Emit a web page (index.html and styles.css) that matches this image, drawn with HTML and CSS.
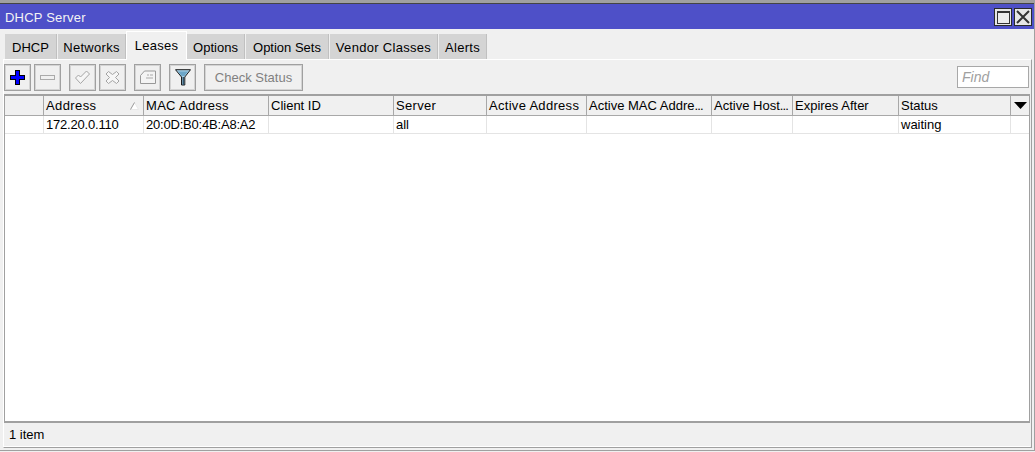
FILE: index.html
```html
<!DOCTYPE html>
<html lang="en">
<head>
<meta charset="utf-8">
<title>DHCP Server</title>
<link rel="stylesheet" href="styles.css">
</head>
<body>
<div class="window">
  <div class="titlebar">
    <span class="title">DHCP Server</span>
    <div class="winbtns">
      <button class="winbtn"><svg width="16" height="16" viewBox="0 0 16 16"><rect x="2" y="2" width="12" height="12" fill="#ececec" stroke="#333" shape-rendering="crispEdges"/><rect x="2" y="2" width="12" height="2" fill="#333" shape-rendering="crispEdges"/></svg></button>
      <button class="winbtn"><svg width="16" height="16" viewBox="0 0 16 16"><path d="M2 2L14 14M14 2L2 14" stroke="#333" stroke-width="2" fill="none"/></svg></button>
    </div>
  </div>
  <div class="tabs">
    <div class="tab w-dhcp">DHCP</div>
    <div class="tab w-net wide">Networks</div>
    <div class="tab active wide">Leases</div>
    <div class="tab w-opt">Options</div>
    <div class="tab w-sets">Option Sets</div>
    <div class="tab w-vendor wide">Vendor Classes</div>
    <div class="tab w-alerts wide">Alerts</div>
  </div>
  <div class="panel">
    <div class="toolbar">
      <div class="tool"><svg width="15" height="15" viewBox="0 0 15 15" shape-rendering="crispEdges"><path d="M5 0h5v5h5v5h-5v5H5v-5H0V5h5z" fill="#000"/><path d="M6 1h3v5h5v3H9v5H6V9H1V6h5z" fill="#0000ff"/></svg></div>
      <div class="tool"><svg width="15" height="15" viewBox="0 0 15 15" shape-rendering="crispEdges"><rect x="0.500" y="5.500" width="14" height="4" fill="#f0f0f0" stroke="#aaa"/></svg></div>
      <div class="tool sep-l"><svg width="15" height="14" viewBox="0 0 15 14"><path d="M0.500 8l3-3 2 2 6-6 3 3-9 9.500z" fill="#f6f6f6" stroke="#a4a4a4"/></svg></div>
      <div class="tool"><svg width="15" height="15" viewBox="0 0 15 15"><path d="M3.500 1.500l4 3 4-3 2.500 2.500-3.500 3.500 3.500 3.500-2.500 2.500-4-3-4 3-2.500-2.500 3.500-3.500-3.500-3.500z" fill="#f6f6f6" stroke="#a4a4a4"/></svg></div>
      <div class="tool sep-l"><svg width="16" height="14" viewBox="0 0 16 14"><path d="M0.500 13.500V5.500l4-4.500h11v12.500z" fill="#f4f4f4" stroke="#999"/><path d="M7 5h2M10 5h3M6 8h7" stroke="#aaa"/></svg></div>
      <div class="tool sep-l"><svg width="16" height="17" viewBox="0 0 16 17"><path d="M0.500 0.700h15L9.800 8v8H6.500V8z" fill="#a9d0e6" stroke="#1c1c1c"/><path d="M7.500 8h1.500v8H7.500z" fill="#33576e"/><path d="M3 2.500h10L9.500 7h-3z" fill="#6ca6c8"/></svg></div>
      <div class="tool textbtn sep-l">Check Status</div>
      <input class="find" placeholder="Find">
    </div>
    <div class="table">
      <div class="row head">
        <div class="cell"></div>
        <div class="cell sorted wider">Address<svg class="sort" width="9" height="8" viewBox="0 0 9 8"><path d="M4.500 0.500L8.500 7.500H0.500" fill="#fff" stroke="#e8e8e8"/><path d="M0.500 7.500L4.500 0.500" fill="none" stroke="#989898"/></svg></div>
        <div class="cell wide">MAC Address</div>
        <div class="cell">Client ID</div>
        <div class="cell wide">Server</div>
        <div class="cell wide">Active Address</div>
        <div class="cell">Active MAC Addre<span class="dots">...</span></div>
        <div class="cell">Active Host<span class="dots">...</span></div>
        <div class="cell">Expires After</div>
        <div class="cell">Status</div>
        <div class="cell menu"><svg width="13" height="7" viewBox="0 0 13 7"><path d="M0 0h13L6.500 7z" fill="#000"/></svg></div>
      </div>
      <div class="row body">
        <div class="cell"></div>
        <div class="cell tight">172.20.0.110</div>
        <div class="cell tight">20:0D:B0:4B:A8:A2</div>
        <div class="cell"></div>
        <div class="cell">all</div>
        <div class="cell"></div>
        <div class="cell"></div>
        <div class="cell"></div>
        <div class="cell"></div>
        <div class="cell">waiting</div>
        <div class="cell"></div>
      </div>
    </div>
    <div class="status">1 item</div>
  </div>
</div>
</body>
</html>
```
FILE: styles.css
```css
* { box-sizing: border-box; }
html, body { margin: 0; padding: 0; background: #f0f0f0; }
body {
  width: 1035px;
  height: 452px;
  overflow: hidden;
  font-family: "Liberation Sans", Arial, sans-serif;
  font-size: 13px;
  color: #000;
}
.wide { letter-spacing: 0.3px; }
.wider { letter-spacing: 0.4px; }
.tight { letter-spacing: -0.2px; }
.dots { letter-spacing: -0.9px; }
.window {
  height: 451px;
  border-top: 3px solid #a0a0a0;
  border-bottom: 1px solid #a0a0a0;
  border-right: 1px solid #a0a0a0;
  display: flex;
  flex-direction: column;
}
.titlebar {
  height: 26px;
  border-top: 1px solid #444;
  background: #4e50c8;
  display: flex;
  align-items: center;
  justify-content: space-between;
  padding: 1px 2px 0 5px;
  flex: none;
}
.title { color: #f4f4f4; font-size: 13px; letter-spacing: 0.2px; padding-top: 1px; }
.winbtns { display: flex; gap: 2px; }
.winbtn {
  width: 18px;
  height: 18px;
  padding: 0;
  border: 1px solid #2a2a2a;
  background: #e6e6e6;
  display: flex;
  align-items: center;
  justify-content: center;
  overflow: hidden;
}
.tabs {
  display: flex;
  height: 30px;
  align-items: flex-end;
  padding-left: 5px;
  flex: none;
}
.tab {
  height: 25px;
  margin-right: 1px;
  padding-top: 1px;
  background: #d4d4d4;
  border-right: 1px solid #c0c0c0;
  display: flex;
  align-items: center;
  justify-content: center;
  flex: none;
}
.w-dhcp { width: 52px; }
.w-net { width: 68px; margin-right: 0; }
.w-opt { width: 58px; }
.w-sets { width: 83px; }
.w-vendor { width: 108px; }
.w-alerts { width: 48px; }
.tab.active {
  position: relative;
  z-index: 1;
  width: 61px;
  height: 29px;
  margin-bottom: -1px;
  margin-right: 0;
  padding: 0 0 2px;
  background: #f0f0f0;
  border: 1px solid #fff;
  border-bottom: none;
}
.panel {
  flex: 1;
  display: flex;
  flex-direction: column;
  margin: 0 2px 2px 3px;
  padding-right: 1px;
  border-top: 1px solid #fff;
  border-right: 1px solid #a0a0a0;
  border-left: 1px solid #fff;
  border-bottom: 1px solid #a0a0a0;
  min-height: 0;
}
.toolbar {
  height: 34px;
  display: flex;
  align-items: center;
  flex: none;
}
.tool {
  width: 27px;
  height: 27px;
  border: 1px solid #a0a0a0;
  box-shadow: inset 0 0 0 1px #d4d4d4;
  margin-right: 3px;
  display: flex;
  align-items: center;
  justify-content: center;
  flex: none;
}
.sep-l { margin-left: 5px; }
.textbtn { width: 99px; color: #808080; font-size: 13px; margin-right: 0; }
.find {
  margin-left: auto;
  margin-right: 1px;
  width: 72px;
  height: 22px;
  border: 1px solid #a8a8a8;
  background: #fff;
  font: italic 14px "Liberation Sans", Arial, sans-serif;
  padding: 0 4px;
}
.find::placeholder { color: #a0a0a0; opacity: 1; }
.table {
  flex: 1;
  background: #fff;
  border-top: 2px solid #a0a0a0;
  border-bottom: 2px solid #a0a0a0;
  border-left: 1px solid #a0a0a0;
  border-right: 1px solid #a0a0a0;
  min-height: 0;
}
.row {
  display: grid;
  grid-template-columns: 39px 100px 125px 125px 93px 100px 125px 81px 106px 112px 1fr;
}
.head { height: 20px; background: #f0f0f0; border-bottom: 1px solid #a8a8a8; }
.body { height: 18px; background: #fff; border-bottom: 1px solid #e4e4e4; }
.cell {
  padding-left: 2px;
  white-space: nowrap;
  overflow: hidden;
  display: flex;
  align-items: center;
}
.head .cell { border-right: 1px solid #a8a8a8; }
.body .cell { border-right: 1px solid #e4e4e4; }
.row .cell:last-child { border-right: none; }
.sorted { justify-content: space-between; padding-right: 4px; }
.menu { justify-content: center; padding-left: 1px; }
.status {
  height: 24px;
  flex: none;
  display: flex;
  align-items: center;
  padding-left: 5px;
  border-bottom: 1px solid #fff;
}
```
